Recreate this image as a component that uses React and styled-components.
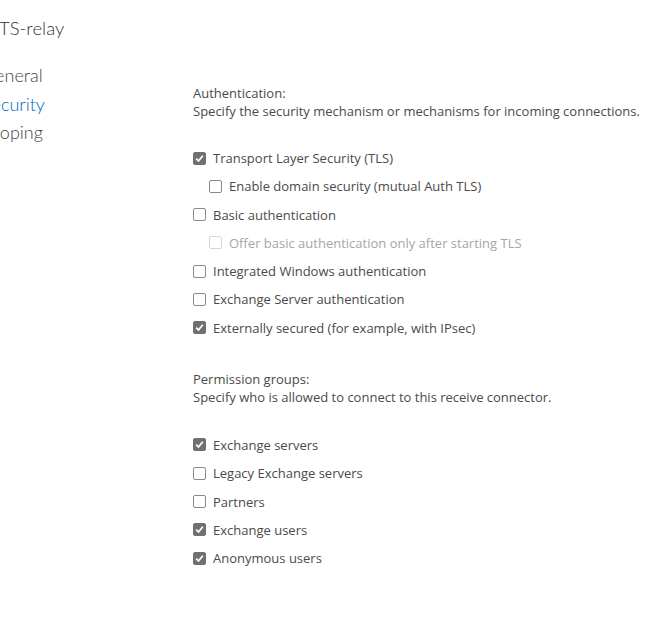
import React from 'react';
import styled, { createGlobalStyle } from 'styled-components';

const GlobalStyle = createGlobalStyle`
  html, body {
    margin: 0;
    padding: 0;
    background: #fff;
  }
  body {
    font-family: 'Open Sans', 'Noto Sans', sans-serif;
    color: #4a4a4a;
    overflow: hidden;
  }
`;

const Page = styled.div`
  display: flex;
  width: 671px;
  height: 626px;
  overflow: hidden;
`;

const Sidebar = styled.div`
  flex: 0 0 193px;
  display: flex;
  flex-direction: column;
  margin-left: -18px;
  font-family: Lato, 'Open Sans', sans-serif;
  font-weight: 300;
`;

const Title = styled.h1`
  margin: 14px 0 0 17px;
  font-size: 18.5px;
  font-weight: 300;
  line-height: 28px;
  color: #333;
  white-space: nowrap;
`;

const Nav = styled.ul`
  list-style: none;
  margin: 19px 0 0;
  padding: 0;
  display: flex;
  flex-direction: column;
`;

const NavItem = styled.li`
  font-size: 18px;
  line-height: 28.5px;
  color: ${({ active }) => (active ? '#0067b8' : '#444')};
  white-space: nowrap;
`;

const Content = styled.div`
  flex: 1;
  padding-top: 83.5px;
  padding-left: 18px;
`;

const Section = styled.section`
  & + & {
    margin-top: 28px;
  }
`;

const Heading = styled.div`
  font-size: 13px;
  line-height: 18.5px;
  color: #4a4a4a;
  white-space: nowrap;
`;

const Options = styled.div`
  margin-top: ${({ gap }) => gap}px;
  display: flex;
  flex-direction: column;
`;

const Row = styled.label`
  display: flex;
  align-items: center;
  gap: 7px;
  height: 28.28px;
  padding-left: ${({ indent }) => (indent ? 16 : 0)}px;
  font-size: 13px;
  color: ${({ disabled }) => (disabled ? '#a6a6a6' : '#4a4a4a')};
  white-space: nowrap;
`;

const Box = styled.span`
  box-sizing: border-box;
  width: 13px;
  height: 13px;
  border-radius: 2px;
  border: 1px solid
    ${({ checked, disabled }) =>
      checked ? '#707070' : disabled ? '#d6d6d6' : '#8a8a8a'};
  background: ${({ checked }) => (checked ? '#707070' : '#fff')};
  display: flex;
  align-items: center;
  justify-content: center;
  flex-shrink: 0;
`;

const Check = ({ checked, disabled }) => (
  <Box checked={checked} disabled={disabled}>
    {checked && (
      <svg width="9" height="9" viewBox="0 0 9 9">
        <path
          d="M1.2 4.6 L3.5 7 L7.8 1.8"
          fill="none"
          stroke="#fff"
          strokeWidth="1.8"
        />
      </svg>
    )}
  </Box>
);

const Option = ({ label, checked, indent, disabled }) => (
  <Row indent={indent} disabled={disabled}>
    <Check checked={checked} disabled={disabled} />
    <span>{label}</span>
  </Row>
);

const authOptions = [
  { label: 'Transport Layer Security (TLS)', checked: true },
  { label: 'Enable domain security (mutual Auth TLS)', indent: true },
  { label: 'Basic authentication' },
  {
    label: 'Offer basic authentication only after starting TLS',
    indent: true,
    disabled: true,
  },
  { label: 'Integrated Windows authentication' },
  { label: 'Exchange Server authentication' },
  { label: 'Externally secured (for example, with IPsec)', checked: true },
];

const permissionOptions = [
  { label: 'Exchange servers', checked: true },
  { label: 'Legacy Exchange servers' },
  { label: 'Partners' },
  { label: 'Exchange users', checked: true },
  { label: 'Anonymous users', checked: true },
];

export default function App() {
  return (
    <>
      <GlobalStyle />
      <Page>
        <Sidebar>
          <Title>TS-relay</Title>
          <Nav>
            <NavItem>General</NavItem>
            <NavItem active>Security</NavItem>
            <NavItem>Scoping</NavItem>
          </Nav>
        </Sidebar>
        <Content>
          <Section>
            <Heading>Authentication:</Heading>
            <Heading>
              Specify the security mechanism or mechanisms for incoming
              connections.
            </Heading>
            <Options gap={23.5}>
              {authOptions.map((o) => (
                <Option key={o.label} {...o} />
              ))}
            </Options>
          </Section>
          <Section>
            <Heading>Permission groups:</Heading>
            <Heading>
              Specify who is allowed to connect to this receive connector.
            </Heading>
            <Options gap={24}>
              {permissionOptions.map((o) => (
                <Option key={o.label} {...o} />
              ))}
            </Options>
          </Section>
        </Content>
      </Page>
    </>
  );
}
